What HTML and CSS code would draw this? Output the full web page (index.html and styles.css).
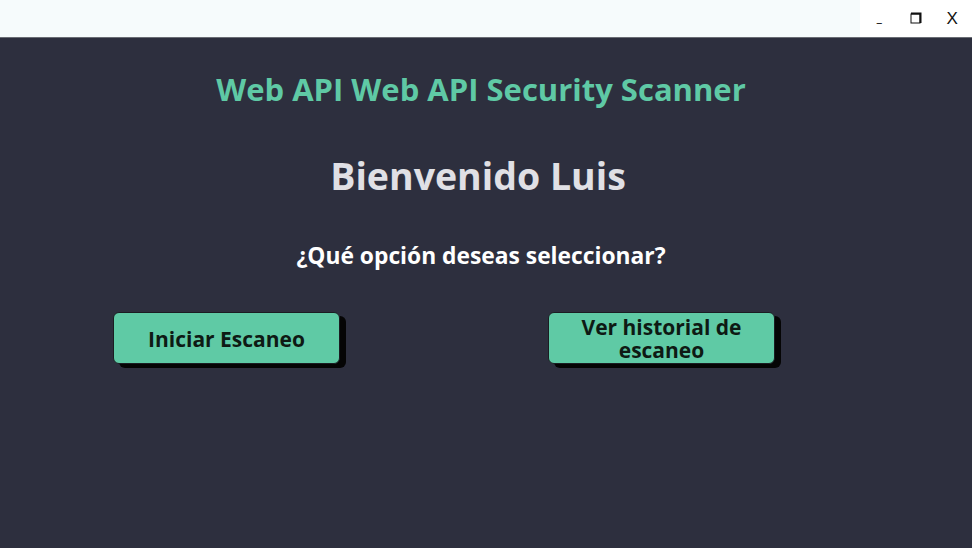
FILE: index.html
```html
<!DOCTYPE html>
<html lang="es">
<head>
<meta charset="utf-8">
<title>Web API Security Scanner</title>
<link rel="stylesheet" href="styles.css">
</head>
<body>
<div class="app">
  <header class="titlebar">
    <div class="controls">
      <span class="ctl ctl-min">–</span>
      <span class="ctl ctl-max">
        <svg width="12" height="12" viewBox="0 0 12 12" aria-hidden="true">
          <rect x="1" y="2" width="9" height="9" fill="none" stroke="#111" stroke-width="1"/>
          <path d="M1 1.5 H10.5 V11" fill="none" stroke="#111" stroke-width="2"/>
        </svg>
      </span>
      <span class="ctl ctl-close">X</span>
    </div>
  </header>
  <main class="content">
    <h1 class="title">Web API Web API Security Scanner</h1>
    <h2 class="welcome">Bienvenido Luis</h2>
    <p class="question">¿Qué opción deseas seleccionar?</p>
    <div class="actions">
      <button class="btn">Iniciar Escaneo</button>
      <button class="btn">Ver historial de<br>escaneo</button>
    </div>
  </main>
</div>
</body>
</html>
```

FILE: styles.css
```css
* { box-sizing: border-box; }
html, body { margin: 0; padding: 0; }
body {
  width: 972px;
  height: 548px;
  overflow: hidden;
  background: #2d2f3e;
  font-family: "Open Sans", "Noto Sans", sans-serif;
}
.app { display: flex; flex-direction: column; height: 548px; }
.titlebar {
  height: 38px;
  background: #f6fbfc;
  border-bottom: 1px solid #6a6d74;
  display: flex;
  justify-content: flex-end;
}
.controls {
  width: 112px;
  height: 37px;
  background: #ffffff;
  display: flex;
  align-items: center;
  padding: 0 0 0 16px;
}
.ctl { color: #111; font-family: "DejaVu Sans", sans-serif; line-height: 1; }
.ctl-min { font-size: 13px; padding-top: 8px; }
.ctl-max { display: flex; padding-bottom: 2px; margin-left: 27px; }
.ctl-close { font-size: 17px; font-family: "Liberation Sans", sans-serif; margin-left: 25px; }
.content {
  flex: 1;
  display: flex;
  flex-direction: column;
  align-items: center;
  padding-right: 10px;
}
.title {
  margin: 27px 0 0;
  font-size: 31px;
  font-weight: 700;
  color: #5fc9a5;
  line-height: 48px;
}
.welcome {
  margin: 39px 6px 0 0;
  font-size: 37.5px;
  font-weight: 700;
  color: #e0e0e5;
  line-height: 48px;
}
.question {
  margin: 41px 0 0;
  font-size: 22.8px;
  font-weight: 700;
  color: #ffffff;
  line-height: 30px;
}
.actions {
  align-self: stretch;
  display: flex;
  gap: 208px;
  padding-left: 113px;
  margin-top: 41px;
}
.btn {
  width: 227px;
  height: 52px;
  background: #5fcaa5;
  border: 1px solid #1b1d22;
  border-radius: 6px;
  box-shadow: 6px 4px 0 #050505;
  font-family: "Open Sans", "Noto Sans", sans-serif;
  font-weight: 700;
  font-size: 21px;
  line-height: 23px;
  color: #0e1a14;
  padding: 2px 8px 0;
}
```
